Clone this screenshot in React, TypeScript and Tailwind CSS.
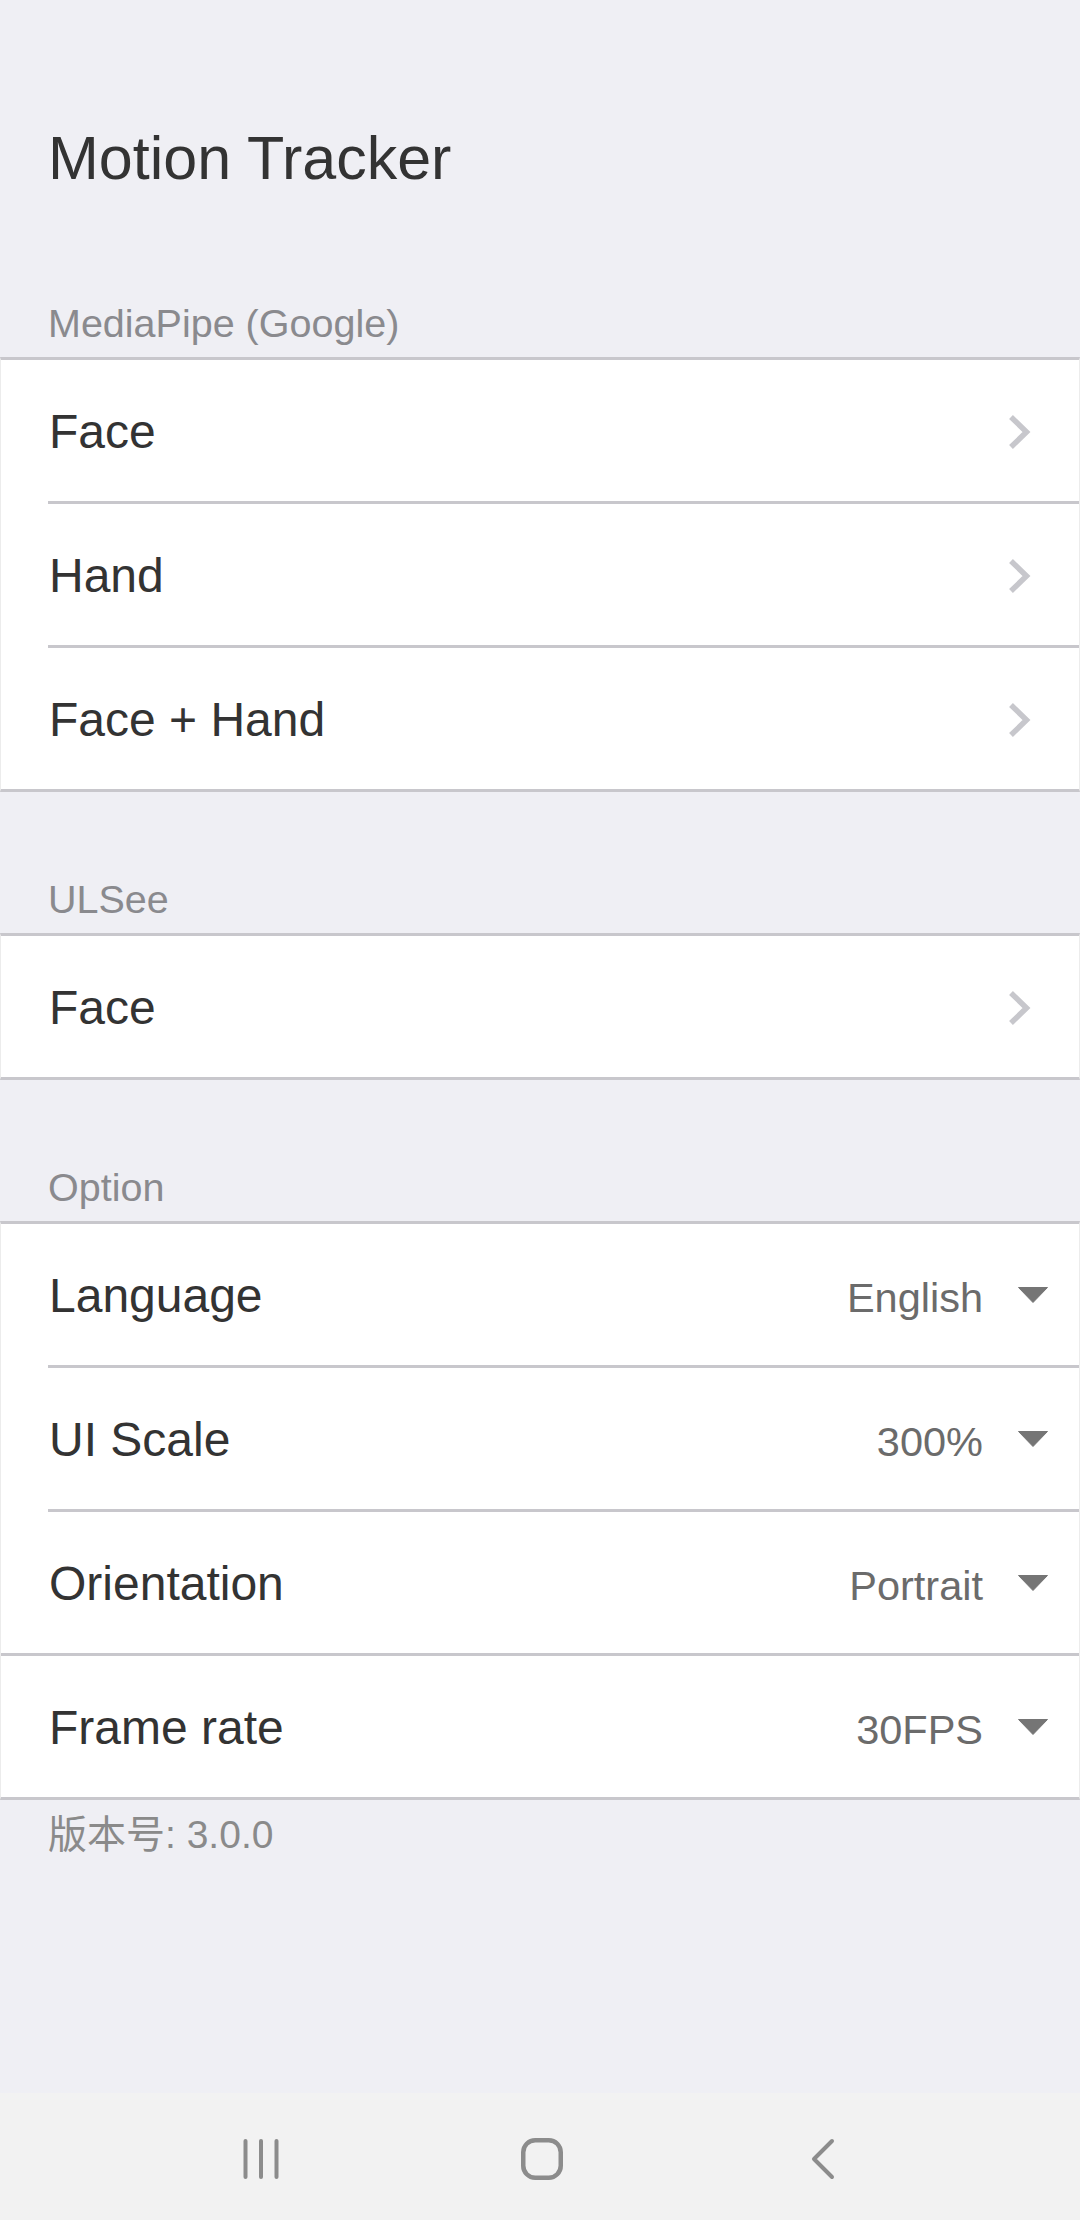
import React from "react";

type Row = { label: string; value?: string; full?: boolean };

const groups: { title: string; rows: Row[] }[] = [
  {
    title: "MediaPipe (Google)",
    rows: [{ label: "Face" }, { label: "Hand" }, { label: "Face + Hand" }],
  },
  { title: "ULSee", rows: [{ label: "Face" }] },
  {
    title: "Option",
    rows: [
      { label: "Language", value: "English" },
      { label: "UI Scale", value: "300%" },
      { label: "Orientation", value: "Portrait", full: true },
      { label: "Frame rate", value: "30FPS" },
    ],
  },
];

function Chevron() {
  return (
    <svg width="24" height="36" viewBox="0 0 24 36" className="shrink-0">
      <polyline
        points="3,3 18.5,18 3,33"
        fill="none"
        stroke="#c7c7cc"
        strokeWidth="5.5"
        strokeLinejoin="miter"
      />
    </svg>
  );
}

function Caret() {
  return (
    <svg width="30" height="16" viewBox="0 0 30 16" className="shrink-0">
      <polygon points="0.5,0.5 29.5,0.5 15,15.5" fill="#757575" stroke="#757575" strokeWidth="1" strokeLinejoin="round" />
    </svg>
  );
}

function SettingRow({ row }: { row: Row }) {
  return (
    <div className="h-[141px] flex items-center pl-[48px]">
      <span className="flex-1 pt-[3px] text-[48px] leading-[48px] text-[#333333]">{row.label}</span>
      {row.value ? (
        <div className="flex items-center gap-[35px] pr-[31px]">
          <span className="pt-[6px] text-[41.5px] leading-[48px] text-[#6b6b6b]">{row.value}</span>
          <Caret />
        </div>
      ) : (
        <div className="pr-[47px] pt-[2px]">
          <Chevron />
        </div>
      )}
    </div>
  );
}

function NavBar() {
  return (
    <div className="h-[127px] bg-[#f2f2f2] flex items-center pl-[201px] gap-[161px] pt-[4px]">
      {/* recent apps */}
      <div className="w-[120px] flex justify-center">
        <svg width="36" height="42" viewBox="0 0 36 42">
          <g stroke="#8c8c8c" strokeWidth="4" strokeLinecap="round">
            <line x1="2.5" y1="3" x2="2.5" y2="39" />
            <line x1="18" y1="3" x2="18" y2="39" />
            <line x1="33.5" y1="3" x2="33.5" y2="39" />
          </g>
        </svg>
      </div>
      {/* home */}
      <div className="w-[120px] flex justify-center">
        <svg width="42" height="42" viewBox="0 0 42 42">
          <rect x="2.25" y="2.25" width="37.5" height="37.5" rx="12" fill="none" stroke="#8c8c8c" strokeWidth="4.5" />
        </svg>
      </div>
      {/* back */}
      <div className="w-[120px] flex justify-center">
        <svg width="24" height="42" viewBox="0 0 24 42">
          <polyline
            points="21,3 3,21 21,39"
            fill="none"
            stroke="#8c8c8c"
            strokeWidth="4"
            strokeLinecap="round"
            strokeLinejoin="round"
          />
        </svg>
      </div>
    </div>
  );
}

export default function App() {
  return (
    <div className="w-[1080px] h-[2220px] bg-[#efeff4] flex flex-col font-['Liberation_Sans','Noto_Sans_CJK_SC',sans-serif]">
      <div className="flex-1">
        {/* Title */}
        <div className="h-[216px] pt-[128px] pl-[48px] text-[61px] leading-[61px] text-[#333333]">
          Motion Tracker
        </div>

        {groups.map((g) => (
          <div key={g.title}>
            <div className="h-[141px] flex items-end pl-[48px] pb-[14px] text-[39.5px] leading-[39px] text-[#8a8a8e]">
              {g.title}
            </div>
            <div className="bg-white border-y-[3px] border-x border-y-[#c8c7cc] border-x-[#ececec]">
              {g.rows.map((r, i) => (
                <div key={r.label}>
                  <SettingRow row={r} />
                  {i < g.rows.length - 1 && (
                    <div className={r.full ? "h-[3px] bg-[#c8c7cc]" : "ml-[47px] h-[3px] bg-[#c8c7cc]"} />
                  )}
                </div>
              ))}
            </div>
          </div>
        ))}

        {/* Version */}
        <div className="pt-[15px] pl-[48px] text-[39px] leading-[39px] text-[#8a8a8a]">版本号: 3.0.0</div>
      </div>

      <NavBar />
    </div>
  );
}
